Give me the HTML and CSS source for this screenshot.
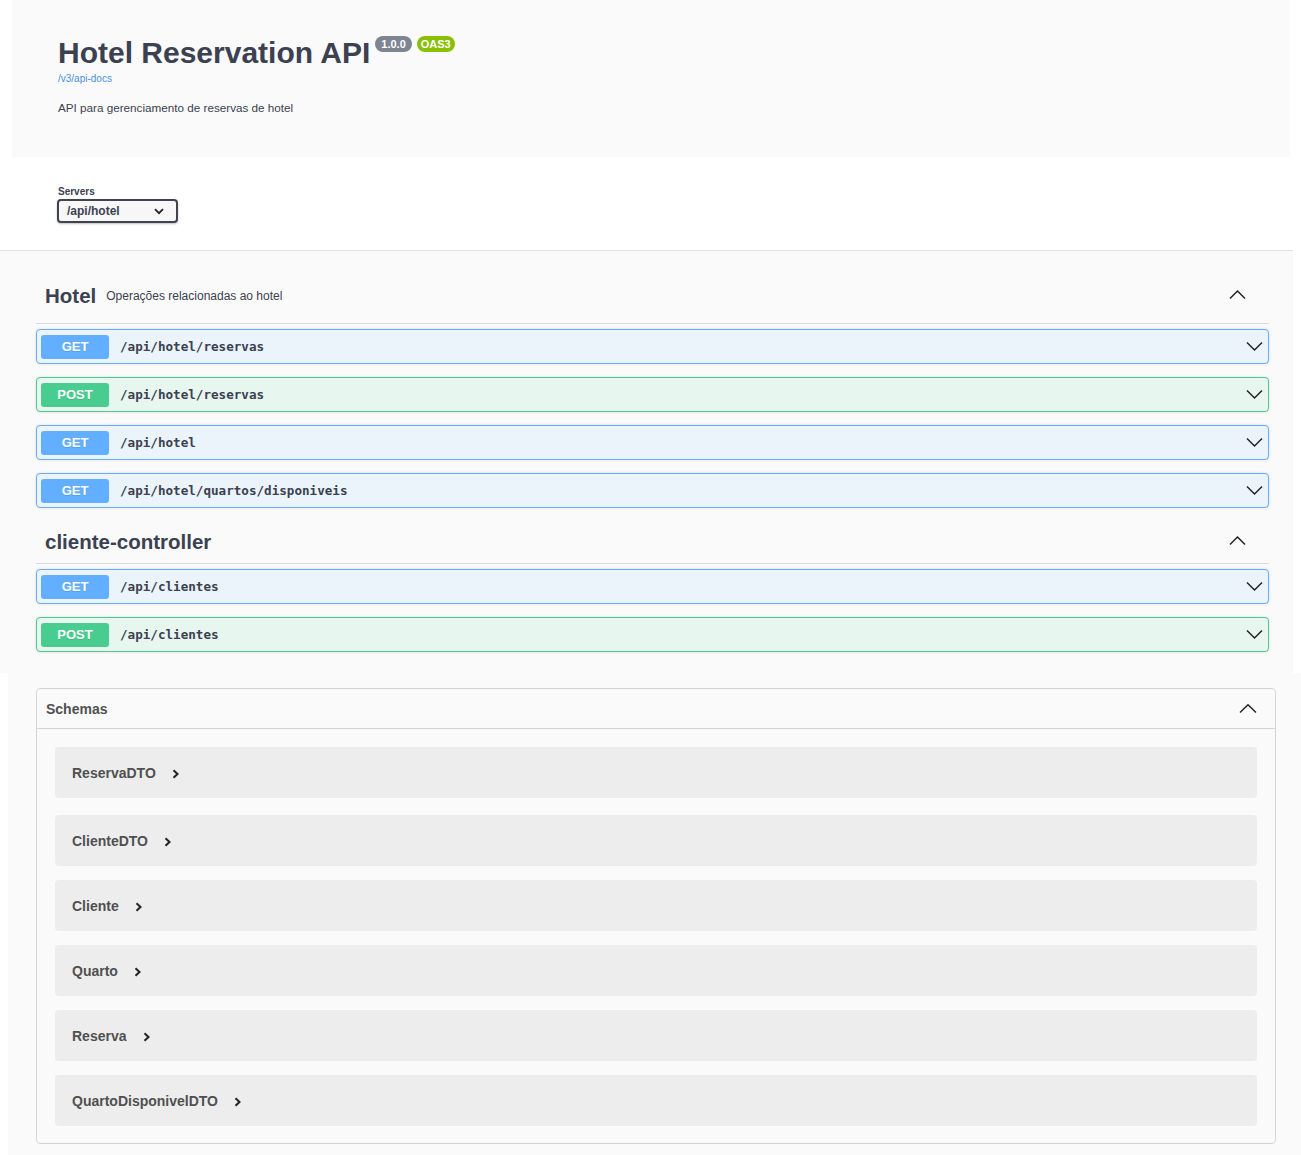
FILE: index.html
```html
<!DOCTYPE html>
<html lang="pt">
<head>
<meta charset="utf-8">
<title>Swagger UI</title>
<link rel="stylesheet" href="styles.css">
</head>
<body>
<div class="info-wrap">
  <div class="title-row">
    <h1 class="title">Hotel Reservation API</h1>
    <span class="badge badge-version">1.0.0</span>
    <span class="badge badge-oas">OAS3</span>
  </div>
  <a class="spec-link" href="#">/v3/api-docs</a>
  <p class="description">API para gerenciamento de reservas de hotel</p>
</div>

<div class="scheme-container">
  <div class="servers-label">Servers</div>
  <div class="select">
    <span>/api/hotel</span>
    <svg class="select-arrow" width="10" height="7" viewBox="0 0 10 7"><polyline points="1,1.2 5,5.2 9,1.2" fill="none" stroke="#222" stroke-width="1.8"/></svg>
  </div>
</div>

<div class="tags-panel">
  <section class="tag-section">
    <div class="tag-head tag-head-hotel">
      <h3 class="tag-name">Hotel</h3>
      <span class="tag-desc">Operações relacionadas ao hotel</span>
      <svg class="tag-chevron" width="17" height="11" viewBox="0 0 17 11"><polyline points="1,9.5 8.5,2 16,9.5" fill="none" stroke="#222" stroke-width="1.5"/></svg>
    </div>
    <div class="opblock opblock-get">
      <span class="method">GET</span><span class="path">/api/hotel/reservas</span>
      <svg class="op-chevron" width="17" height="11" viewBox="0 0 17 11"><polyline points="1,1.5 8.5,9 16,1.5" fill="none" stroke="#222" stroke-width="1.5"/></svg>
    </div>
    <div class="opblock opblock-post">
      <span class="method">POST</span><span class="path">/api/hotel/reservas</span>
      <svg class="op-chevron" width="17" height="11" viewBox="0 0 17 11"><polyline points="1,1.5 8.5,9 16,1.5" fill="none" stroke="#222" stroke-width="1.5"/></svg>
    </div>
    <div class="opblock opblock-get">
      <span class="method">GET</span><span class="path">/api/hotel</span>
      <svg class="op-chevron" width="17" height="11" viewBox="0 0 17 11"><polyline points="1,1.5 8.5,9 16,1.5" fill="none" stroke="#222" stroke-width="1.5"/></svg>
    </div>
    <div class="opblock opblock-get">
      <span class="method">GET</span><span class="path">/api/hotel/quartos/disponiveis</span>
      <svg class="op-chevron" width="17" height="11" viewBox="0 0 17 11"><polyline points="1,1.5 8.5,9 16,1.5" fill="none" stroke="#222" stroke-width="1.5"/></svg>
    </div>
  </section>

  <section class="tag-section">
    <div class="tag-head tag-head-cliente">
      <h3 class="tag-name">cliente-controller</h3>
      <svg class="tag-chevron" width="17" height="11" viewBox="0 0 17 11"><polyline points="1,9.5 8.5,2 16,9.5" fill="none" stroke="#222" stroke-width="1.5"/></svg>
    </div>
    <div class="opblock opblock-get">
      <span class="method">GET</span><span class="path">/api/clientes</span>
      <svg class="op-chevron" width="17" height="11" viewBox="0 0 17 11"><polyline points="1,1.5 8.5,9 16,1.5" fill="none" stroke="#222" stroke-width="1.5"/></svg>
    </div>
    <div class="opblock opblock-post">
      <span class="method">POST</span><span class="path">/api/clientes</span>
      <svg class="op-chevron" width="17" height="11" viewBox="0 0 17 11"><polyline points="1,1.5 8.5,9 16,1.5" fill="none" stroke="#222" stroke-width="1.5"/></svg>
    </div>
  </section>
</div>

<div class="models-panel">
  <section class="models">
    <div class="models-head">
      <h4 class="models-title">Schemas</h4>
      <svg class="models-chevron" width="18" height="11" viewBox="0 0 18 11"><polyline points="1,9.5 9,1.8 17,9.5" fill="none" stroke="#222" stroke-width="1.5"/></svg>
    </div>
    <div class="models-body">
      <div class="model-row"><span class="model-name">ReservaDTO</span><svg class="model-arrow" width="8" height="10" viewBox="0 0 8 10"><polyline points="1.5,1.3 5.5,5 1.5,8.7" fill="none" stroke="#222" stroke-width="2"/></svg></div>
      <div class="model-row"><span class="model-name">ClienteDTO</span><svg class="model-arrow" width="8" height="10" viewBox="0 0 8 10"><polyline points="1.5,1.3 5.5,5 1.5,8.7" fill="none" stroke="#222" stroke-width="2"/></svg></div>
      <div class="model-row"><span class="model-name">Cliente</span><svg class="model-arrow" width="8" height="10" viewBox="0 0 8 10"><polyline points="1.5,1.3 5.5,5 1.5,8.7" fill="none" stroke="#222" stroke-width="2"/></svg></div>
      <div class="model-row"><span class="model-name">Quarto</span><svg class="model-arrow" width="8" height="10" viewBox="0 0 8 10"><polyline points="1.5,1.3 5.5,5 1.5,8.7" fill="none" stroke="#222" stroke-width="2"/></svg></div>
      <div class="model-row"><span class="model-name">Reserva</span><svg class="model-arrow" width="8" height="10" viewBox="0 0 8 10"><polyline points="1.5,1.3 5.5,5 1.5,8.7" fill="none" stroke="#222" stroke-width="2"/></svg></div>
      <div class="model-row"><span class="model-name">QuartoDisponivelDTO</span><svg class="model-arrow" width="8" height="10" viewBox="0 0 8 10"><polyline points="1.5,1.3 5.5,5 1.5,8.7" fill="none" stroke="#222" stroke-width="2"/></svg></div>
    </div>
  </section>
</div>
</body>
</html>
```

FILE: styles.css
```css
* {
  box-sizing: border-box;
}

html,
body {
  margin: 0;
  padding: 0;
}

body {
  background: #ffffff;
  font-family: "Liberation Sans", Arial, sans-serif;
  color: #3b4151;
}

/* ---------- info ---------- */
.info-wrap {
  margin: 0 11px 0 12px;
  height: 157px;
  background: #fafafa;
  padding: 35px 0 0 46px;
}

.title-row {
  display: flex;
  align-items: flex-start;
}

.title {
  margin: 0;
  font-size: 30px;
  line-height: 36px;
  font-weight: 700;
  color: #3b4151;
}

.badge {
  margin: 1px 0 0 5px;
  height: 16px;
  line-height: 16px;
  border-radius: 57px;
  color: #ffffff;
  font-size: 11px;
  font-weight: 700;
}

.badge-version {
  background: #7d8492;
  padding: 0 6px;
}

.badge-oas {
  background: #89bf04;
  padding: 0 4px;
}

.spec-link {
  display: block;
  margin-top: 2px;
  font-size: 10px;
  line-height: 12px;
  color: #4990e2;
  text-decoration: none;
}

.description {
  margin: 16px 0 0;
  font-size: 11.7px;
  line-height: 14px;
  color: #3b4151;
}

/* ---------- servers ---------- */
.scheme-container {
  margin-right: 8px;
  height: 94px;
  padding: 29px 0 0 57px;
  background: #ffffff;
  border-bottom: 1px solid #e1e1e1;
}

.servers-label {
  margin-left: 1px;
  font-size: 10px;
  line-height: 12px;
  font-weight: 700;
  color: #3b4151;
}

.select {
  margin-top: 1px;
  width: 121px;
  height: 24px;
  border: 2px solid #41444e;
  border-radius: 4px;
  background: #f7f7f7;
  box-shadow: 0 1px 2px rgba(0, 0, 0, 0.25);
  display: flex;
  align-items: center;
  padding: 0 12px 0 8px;
  font-size: 12px;
  font-weight: 700;
  color: #3b4151;
}

.select-arrow {
  margin-left: auto;
  margin-top: 1px;
}

/* ---------- operations ---------- */
.tags-panel {
  margin-right: 8px;
  background: #fafafa;
  padding: 0 24px 8px 36px;
}

.tag-head {
  display: flex;
  align-items: center;
  padding-left: 9px;
  padding-right: 23px;
  line-height: 30px;
  border-bottom: 1px solid #dcdcdc;
  margin-bottom: 5px;
}

.tag-head-hotel {
  padding-top: 30px;
  padding-bottom: 12px;
}

.tag-head-cliente {
  padding-top: 6px;
  padding-bottom: 6px;
}

.tag-name {
  margin: 0;
  font-size: 20.5px;
  line-height: 30px;
  font-weight: 700;
  color: #3b4151;
}

.tag-desc {
  margin-left: 10px;
  font-size: 12px;
  line-height: 14px;
  color: #3b4151;
}

.tag-chevron {
  margin-left: auto;
  margin-top: -3px;
}

.opblock {
  display: flex;
  align-items: center;
  height: 35px;
  margin-bottom: 13px;
  padding: 0 5px 0 4px;
  border: 1px solid;
  border-radius: 4px;
  box-shadow: 0 0 3px rgba(0, 0, 0, 0.12);
}

.opblock-get {
  background: #ebf3fb;
  border-color: #61affe;
}

.opblock-post {
  background: #e8f6f0;
  border-color: #49cc90;
}

.method {
  width: 68px;
  height: 24px;
  line-height: 23px;
  border-radius: 3px;
  text-align: center;
  color: #ffffff;
  font-size: 13px;
  font-weight: 700;
  text-shadow: 0 1px 0 rgba(0, 0, 0, 0.1);
}

.opblock-get .method {
  background: #61affe;
}

.opblock-post .method {
  background: #49cc90;
}

.path {
  margin-left: 11px;
  font-family: "DejaVu Sans Mono", "Liberation Mono", monospace;
  font-size: 12.6px;
  font-weight: 700;
  color: #3b4151;
}

.op-chevron {
  margin-left: auto;
}

/* ---------- schemas ---------- */
.models-panel {
  margin-left: 8px;
  background: #fafafa;
  padding: 15px 25px 11px 28px;
}

.models {
  border: 1px solid #d4d4d4;
  border-radius: 4px;
}

.models-head {
  display: flex;
  align-items: center;
  height: 40px;
  padding: 0 18px 0 9px;
  border-bottom: 1px solid #d4d4d4;
}

.models-title {
  margin: 0;
  font-size: 14px;
  font-weight: 700;
  color: #505050;
}

.models-chevron {
  margin-left: auto;
}

.models-body {
  padding: 18px 18px 17px;
}

.model-row {
  display: flex;
  align-items: center;
  height: 51px;
  margin-bottom: 14px;
  padding-left: 17px;
  background: #ededed;
  border-radius: 4px;
}

.model-row:first-child {
  margin-bottom: 17px;
}

.model-row:last-child {
  margin-bottom: 0;
}

.model-name {
  font-size: 14px;
  font-weight: 700;
  color: #505050;
}

.model-arrow {
  margin-left: 16px;
  margin-top: 2px;
}
```
